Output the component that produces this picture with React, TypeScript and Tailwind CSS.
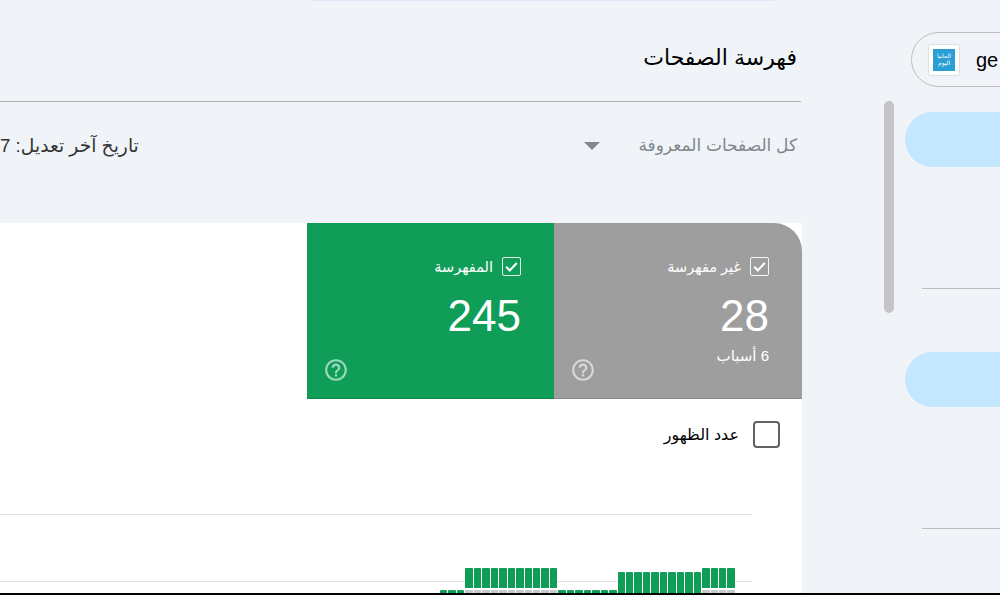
const arabicFont = "font-['Liberation_Sans','DejaVu_Sans',sans-serif]"

const helpPath =
  "M11 18h2v-2h-2v2zm1-16C6.48 2 2 6.48 2 12s4.48 10 10 10 10-4.48 10-10S17.52 2 12 2zm0 18c-4.41 0-8-3.59-8-8s3.59-8 8-8 8 3.59 8 8-3.59 8-8 8zm0-14c-2.21 0-4 1.79-4 4h2c0-1.1.9-2 2-2s2 .9 2 2c0 2-3 1.75-3 5h2c0-2.25 3-2.5 3-5 0-2.21-1.79-4-4-4z"

// top offset inside the chart, green height, grey below
const groups = [
  { count: 3, top: 75, green: 3, grey: false },
  { count: 11, top: 53, green: 20, grey: true },
  { count: 7, top: 75, green: 3, grey: false },
  { count: 10, top: 57, green: 21, grey: false },
  { count: 4, top: 53, green: 20, grey: true },
]
const bars = groups.flatMap((g) => Array.from({ length: g.count }, () => g))

function StatusTile({
  label,
  value,
  sub,
  className,
}: {
  label: string
  value: string
  sub?: string
  className: string
}) {
  return (
    <div className={`relative flex h-[176px] flex-col pt-[34px] pr-[33px] text-white ${className}`}>
      <div className="flex items-center gap-[9px]">
        <span className="flex size-[19px] items-center justify-center rounded-[2px] border-[1.5px] border-white/90">
          <svg viewBox="0 0 24 24" className="size-[17px]" fill="none" stroke="white" strokeWidth="3">
            <path d="M4.5 12.5l5 5L19.5 7" />
          </svg>
        </span>
        <span className="text-[14.5px] leading-[18px]">{label}</span>
      </div>
      <div className="mt-[15px] font-['Liberation_Sans',sans-serif] text-[44px] leading-[50px]">{value}</div>
      {sub && <div className="mt-[6px] text-[15px] leading-[18px]">{sub}</div>}
      <svg viewBox="0 0 24 24" className="absolute bottom-[15px] left-[16px] size-[26px]" fill="white" fillOpacity="0.6">
        <path d={helpPath} />
      </svg>
    </div>
  )
}

function Chart() {
  return (
    <div className="relative mt-[66px] h-[79px] w-[752px] overflow-hidden border-t border-[#e2e2e2]" dir="ltr">
      <div className="mt-[66px] border-t border-[#e2e2e2]" />
      <div className="absolute top-0 left-[440px] flex h-full w-[295px] gap-px">
        {bars.map((b, i) => (
          <div key={i} className="flex-1" style={{ paddingTop: b.top }}>
            <div className="rounded-t-[1px] bg-[#0f9d58]" style={{ height: b.green }} />
            {b.grey && <div className="mt-[2px] h-[6px] bg-[#c9c9c9]" />}
          </div>
        ))}
      </div>
    </div>
  )
}

function Sidebar() {
  return (
    <aside className="flex flex-1 overflow-hidden" dir="ltr">
      <div className="mt-[101px] ml-[82px] h-[212px] w-[10px] shrink-0 rounded-full bg-[#c5c5c5]" />
      <nav className="ml-[11px] w-[220px] shrink-0">
        <div className="mt-[32px] ml-[6px] flex h-[55px] items-center rounded-l-[28px] border border-[#bdbdbd] pl-[16px]">
          <div className="flex size-[32px] items-center justify-center rounded-[2px] border border-[#e0e0e0] bg-white">
            <div className="flex size-[22px] items-center justify-center bg-[#2a9fd6] text-center text-[6px] leading-[7px] text-white" dir="rtl">
              المانيا اليوم
            </div>
          </div>
          <span className="ml-[16px] font-['Liberation_Sans',sans-serif] text-[20px] text-black">ge</span>
        </div>
        <div className="mt-[25px] h-[55px] rounded-l-[28px] bg-[#c2e7ff]" />
        <div className="mt-[121px] ml-[17px] border-t border-[#b9bcbc]" />
        <div className="mt-[63px] h-[55px] rounded-l-[28px] bg-[#c2e7ff]" />
        <div className="mt-[121px] ml-[17px] border-t border-[#b9bcbc]" />
      </nav>
    </aside>
  )
}

export default function App() {
  return (
    <div className={`flex h-[595px] w-[1000px] flex-col overflow-hidden bg-[#f0f4f9] ${arabicFont}`}>
      <div className="flex min-h-0 flex-1">
        <main className="flex w-[802px] shrink-0 flex-col" dir="rtl">
          <div className="mr-[27px] h-px w-[465px] bg-[#e0e7fb]" />
          <h1 className="mt-[41px] mr-[5px] h-[59px] text-[22px] leading-[32px] font-normal text-black">فهرسة الصفحات</h1>
          <div className="mr-px border-t border-[#b4b4b4]" />
          <div className="mt-[33px] flex h-[88px] items-start justify-between pr-[5px]">
            <div className="flex items-center gap-[38px] leading-[22px]">
              <span className="text-[17px] text-[#80868b]">كل الصفحات المعروفة</span>
              <span className="h-0 w-0 border-x-[8px] border-t-[8px] border-x-transparent border-t-[#80868b]" />
            </div>
            <div className="text-[18.7px] leading-[22px] text-[#333333]">تاريخ آخر تعديل: 7</div>
          </div>
          <section className="min-h-0 flex-1 overflow-hidden bg-white">
            <div className="flex">
              <StatusTile label="غير مفهرسة" value="28" sub="6 أسباب" className="w-[248px] rounded-tr-[28px] border-b border-[#8a8a8a] bg-[#9e9e9e]" />
              <StatusTile label="المفهرسة" value="245" className="w-[247px] border-b border-[#0c8a4d] bg-[#0f9d58]" />
            </div>
            <div className="mt-[22px] flex items-center gap-[14px] pr-[22px]">
              <span className="size-[27px] rounded-[4px] border-2 border-[#5f6368]" />
              <span className="text-[16px] text-black">عدد الظهور</span>
            </div>
            <div className="flex justify-end">
              <Chart />
            </div>
          </section>
        </main>
        <Sidebar />
      </div>
      <div className="h-[2px] shrink-0 bg-black" />
    </div>
  )
}
